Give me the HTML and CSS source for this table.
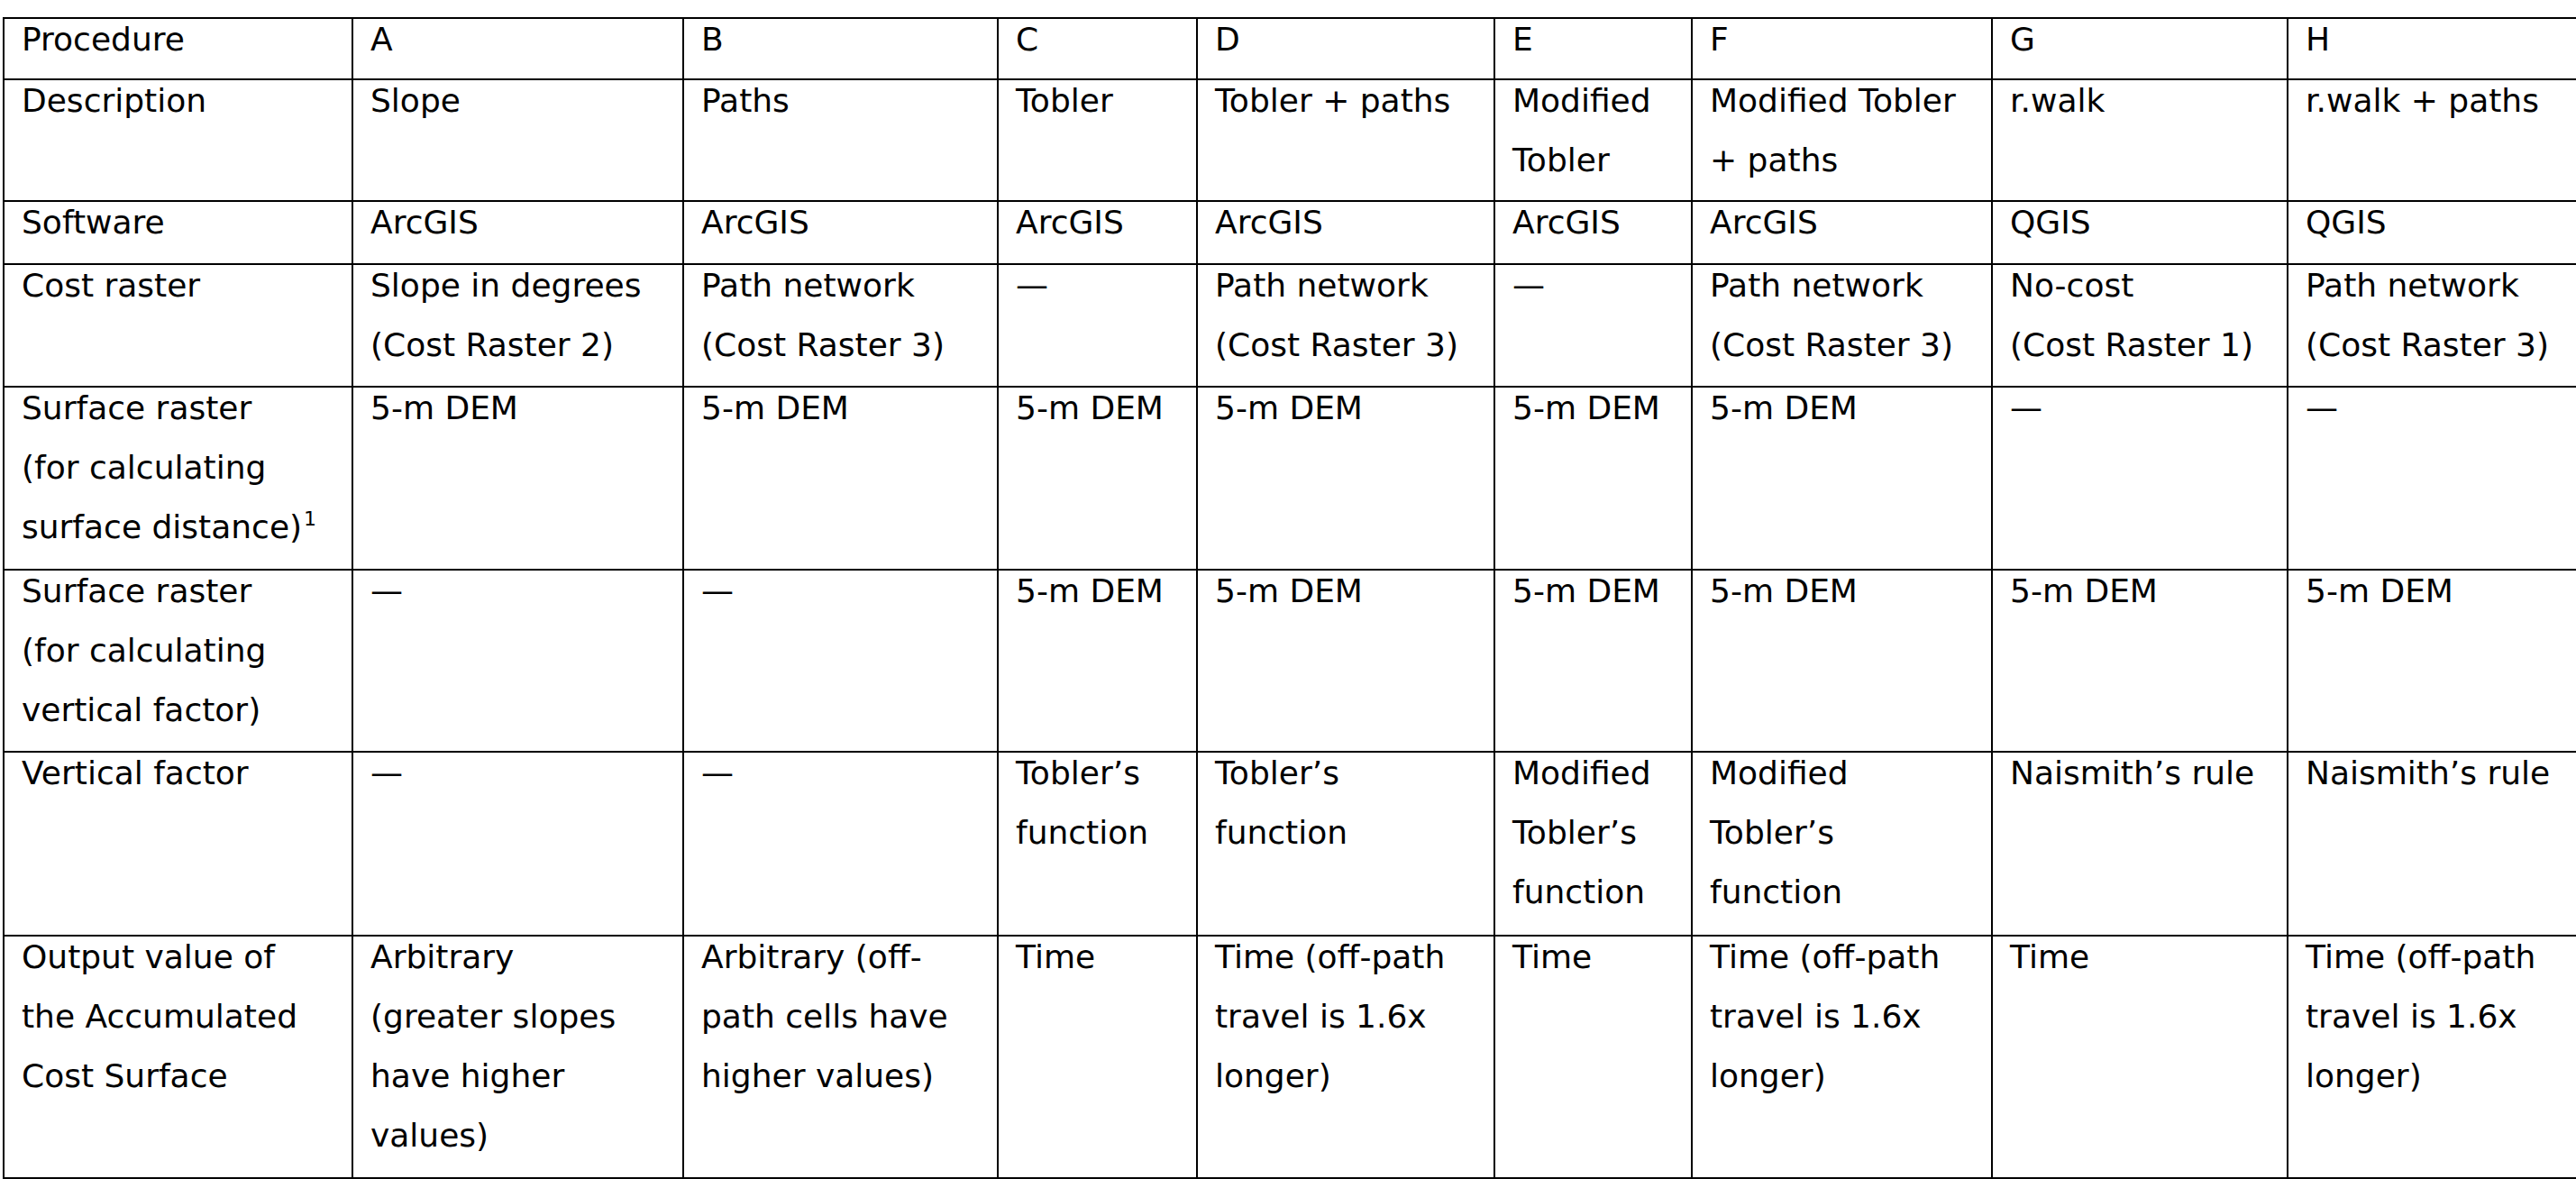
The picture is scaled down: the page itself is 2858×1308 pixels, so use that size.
FILE: index.html
```html
<!DOCTYPE html>
<html lang="en">
<head>
<meta charset="utf-8">
<title>Procedures</title>
<link rel="stylesheet" href="styles.css">
</head>
<body>
<table class="grid">
  <colgroup>
    <col class="c0"><col class="c1"><col class="c2"><col class="c3"><col class="c4"><col class="c5"><col class="c6"><col class="c7"><col class="c8">
  </colgroup>
  <tbody>
    <tr class="r1">
      <td><div class="t">Procedure</div></td>
      <td><div class="t">A</div></td>
      <td><div class="t">B</div></td>
      <td><div class="t">C</div></td>
      <td><div class="t">D</div></td>
      <td><div class="t">E</div></td>
      <td><div class="t">F</div></td>
      <td><div class="t">G</div></td>
      <td><div class="t">H</div></td>
    </tr>
    <tr class="r2">
      <td><div class="t">Description</div></td>
      <td><div class="t">Slope</div></td>
      <td><div class="t">Paths</div></td>
      <td><div class="t">Tobler</div></td>
      <td><div class="t">Tobler + paths</div></td>
      <td><div class="t">Modified<br>Tobler</div></td>
      <td><div class="t">Modified Tobler<br>+ paths</div></td>
      <td><div class="t">r.walk</div></td>
      <td><div class="t">r.walk + paths</div></td>
    </tr>
    <tr class="r3">
      <td><div class="t">Software</div></td>
      <td><div class="t">ArcGIS</div></td>
      <td><div class="t">ArcGIS</div></td>
      <td><div class="t">ArcGIS</div></td>
      <td><div class="t">ArcGIS</div></td>
      <td><div class="t">ArcGIS</div></td>
      <td><div class="t">ArcGIS</div></td>
      <td><div class="t">QGIS</div></td>
      <td><div class="t">QGIS</div></td>
    </tr>
    <tr class="r4">
      <td><div class="t">Cost raster</div></td>
      <td><div class="t">Slope in degrees<br>(Cost Raster 2)</div></td>
      <td><div class="t">Path network<br>(Cost Raster 3)</div></td>
      <td><div class="t">—</div></td>
      <td><div class="t">Path network<br>(Cost Raster 3)</div></td>
      <td><div class="t">—</div></td>
      <td><div class="t">Path network<br>(Cost Raster 3)</div></td>
      <td><div class="t">No-cost<br>(Cost Raster 1)</div></td>
      <td><div class="t">Path network<br>(Cost Raster 3)</div></td>
    </tr>
    <tr class="r5">
      <td><div class="t">Surface raster<br>(for calculating<br>surface distance)<sup class="note">1</sup></div></td>
      <td><div class="t">5-m DEM</div></td>
      <td><div class="t">5-m DEM</div></td>
      <td><div class="t">5-m DEM</div></td>
      <td><div class="t">5-m DEM</div></td>
      <td><div class="t">5-m DEM</div></td>
      <td><div class="t">5-m DEM</div></td>
      <td><div class="t">—</div></td>
      <td><div class="t">—</div></td>
    </tr>
    <tr class="r6">
      <td><div class="t">Surface raster<br>(for calculating<br>vertical factor)</div></td>
      <td><div class="t">—</div></td>
      <td><div class="t">—</div></td>
      <td><div class="t">5-m DEM</div></td>
      <td><div class="t">5-m DEM</div></td>
      <td><div class="t">5-m DEM</div></td>
      <td><div class="t">5-m DEM</div></td>
      <td><div class="t">5-m DEM</div></td>
      <td><div class="t">5-m DEM</div></td>
    </tr>
    <tr class="r7">
      <td><div class="t">Vertical factor</div></td>
      <td><div class="t">—</div></td>
      <td><div class="t">—</div></td>
      <td><div class="t">Tobler’s<br>function</div></td>
      <td><div class="t">Tobler’s<br>function</div></td>
      <td><div class="t">Modified<br>Tobler’s<br>function</div></td>
      <td><div class="t">Modified<br>Tobler’s<br>function</div></td>
      <td><div class="t">Naismith’s rule</div></td>
      <td><div class="t">Naismith’s rule</div></td>
    </tr>
    <tr class="r8">
      <td><div class="t">Output value of<br>the Accumulated<br>Cost Surface</div></td>
      <td><div class="t">Arbitrary<br>(greater slopes<br>have higher<br>values)</div></td>
      <td><div class="t">Arbitrary (off-<br>path cells have<br>higher values)</div></td>
      <td><div class="t">Time</div></td>
      <td><div class="t">Time (off-path<br>travel is 1.6x<br>longer)</div></td>
      <td><div class="t">Time</div></td>
      <td><div class="t">Time (off-path<br>travel is 1.6x<br>longer)</div></td>
      <td><div class="t">Time</div></td>
      <td><div class="t">Time (off-path<br>travel is 1.6x<br>longer)</div></td>
    </tr>
  </tbody>
</table>
</body>
</html>
```

FILE: styles.css
```css
html, body {
  margin: 0;
  padding: 0;
  background: #ffffff;
  overflow: hidden;
}

body {
  padding: 19px 0 0 3px;
  font-family: "DejaVu Sans", Verdana, sans-serif;
  font-size: 36px;
  color: #000000;
}

.grid {
  border-collapse: collapse;
  table-layout: fixed;
  width: 2874px;
}

.c0 { width: 387px; }
.c1 { width: 367px; }
.c2 { width: 349px; }
.c3 { width: 221px; }
.c4 { width: 330px; }
.c5 { width: 219px; }
.c6 { width: 333px; }
.c7 { width: 328px; }
.c8 { width: 340px; }

.r1 { height: 68px; }
.r2 { height: 135px; }
.r3 { height: 70px; }
.r4 { height: 136px; }
.r5 { height: 203px; }
.r6 { height: 202px; }
.r7 { height: 204px; }
.r8 { height: 269px; }

.grid td {
  border: 2px solid #000000;
  padding: 0 12px 0 19px;
  vertical-align: top;
  line-height: 66px;
  white-space: nowrap;
  overflow: hidden;
}

.t {
  margin: -10px 0 10px;
}

.note {
  font-size: 22px;
  line-height: 0;
  vertical-align: 14px;
  margin-left: 2px;
}
```
